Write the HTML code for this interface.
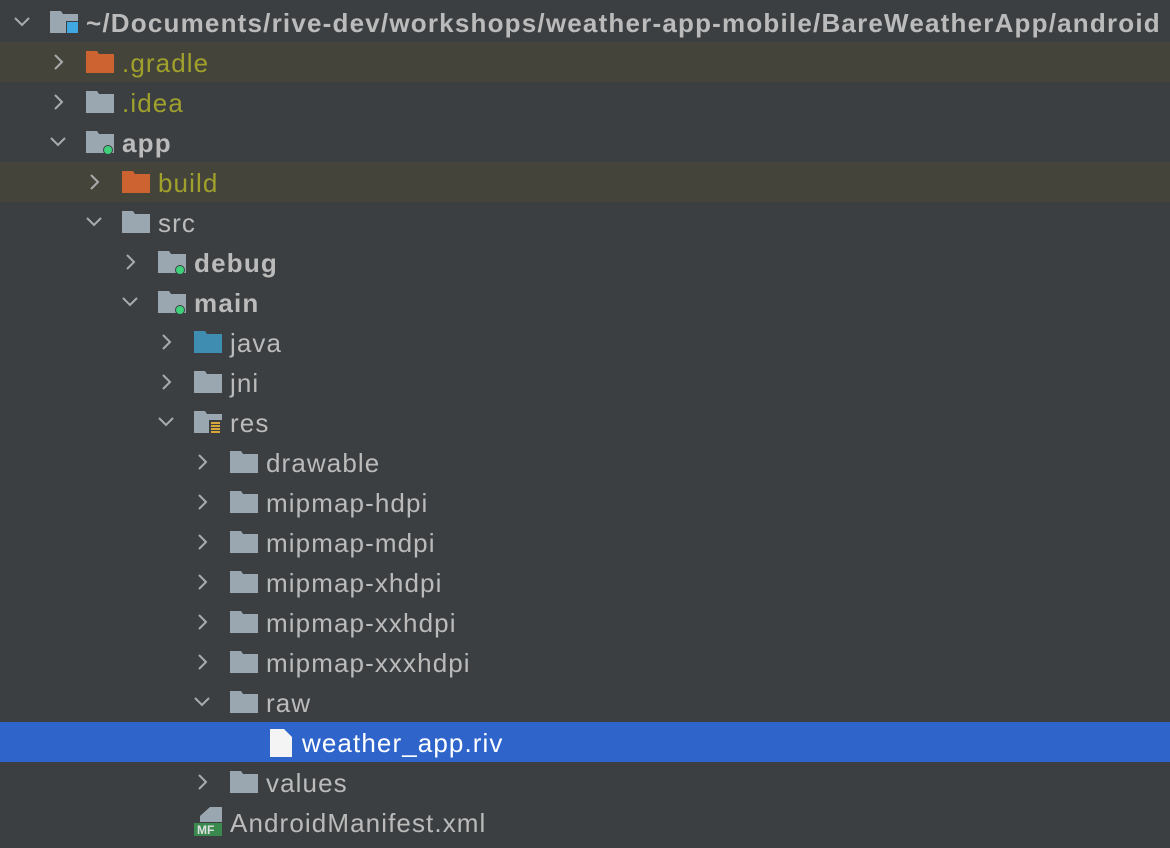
<!DOCTYPE html>
<html><head><style>
body{margin:0;width:1170px;height:848px;background:#3c3f41;overflow:hidden;font-family:"Liberation Sans",sans-serif;}
.r{position:absolute;left:0;width:1170px;height:40px;}
.hl{background:#45443a;}
.sel{background:#2f65ca;}
.r svg{position:absolute;}
.t{position:absolute;top:6px;font-size:26px;letter-spacing:1.1px;color:#bbbbbb;line-height:30px;white-space:nowrap;}
.o{color:#a0a02c}
.b{font-weight:bold;letter-spacing:1.2px}
.w{color:#ffffff}
</style></head><body>
<div id="tree"></div>
<script>
const F='#9aa7b0';
function chev(x,open){return open?`<svg style="left:${x-10}px;top:10px" width="20" height="20"><path d="M3 6 L10 13 L17 6" fill="none" stroke="#a9abad" stroke-width="2"/></svg>`:`<svg style="left:${x-7}px;top:10px" width="20" height="20"><path d="M4 3 L11 10 L4 17" fill="none" stroke="#a9abad" stroke-width="2"/></svg>`;}
function folder(x,c,extra){return `<svg style="left:${x}px;top:9px" width="32" height="26"><path d="M0 0 H11 L13 3 H28 V22 H0 Z" fill="${c}"/>${extra||''}</svg>`;}
const dot='<circle cx="22" cy="19" r="5" fill="#3c3f41"/><circle cx="22" cy="19" r="4" fill="#3ed17a"/>';
const sq='<rect x="16" y="10" width="13" height="13" fill="#3c3f41"/><rect x="17" y="11" width="11" height="11" fill="#3fa8e0"/>';
const resI='<rect x="15" y="9" width="13" height="16" fill="#3c3f41"/><g fill="#d9a63a"><rect x="17" y="11" width="9" height="2"/><rect x="17" y="14" width="9" height="2"/><rect x="17" y="17" width="9" height="2"/><rect x="17" y="20" width="9" height="2"/></g>';
const rows=[
[0,1,'~/Documents/rive-dev/workshops/weather-app-mobile/BareWeatherApp/android','b','root'],
[1,0,'.gradle','o','orange','hl'],
[1,0,'.idea','o','f'],
[1,1,'app','b','dot'],
[2,0,'build','o','orange','hl'],
[2,1,'src','','f'],
[3,0,'debug','b','dot'],
[3,1,'main','b','dot'],
[4,0,'java','','blue'],
[4,0,'jni','','f'],
[4,1,'res','','res'],
[5,0,'drawable','','f'],
[5,0,'mipmap-hdpi','','f'],
[5,0,'mipmap-mdpi','','f'],
[5,0,'mipmap-xhdpi','','f'],
[5,0,'mipmap-xxhdpi','','f'],
[5,0,'mipmap-xxxhdpi','','f'],
[5,1,'raw','','f'],
[6,-1,'weather_app.riv','w','file','sel'],
[5,0,'values','','f'],
[4,-1,'AndroidManifest.xml','','mf'],
];
let h='';
rows.forEach((r,i)=>{
 const [lv,op,txt,cls,ic,bg]=r;
 const cx=22+36*lv, ix=50+36*lv, tx=86+36*lv;
 let s=`<div class="r ${bg||''}" style="top:${2+40*i}px">`;
 if(op>=0)s+=chev(cx,op);
 if(ic=='root')s+=folder(ix,F,sq);
 else if(ic=='orange')s+=folder(ix,'#cc6330');
 else if(ic=='blue')s+=folder(ix,'#3f8db0');
 else if(ic=='dot')s+=folder(ix,F,dot);
 else if(ic=='res')s+=folder(ix,F,resI);
 else if(ic=='f')s+=folder(ix,F);
 else if(ic=='file')s+=`<svg style="left:${ix+4}px;top:7px" width="24" height="28"><path d="M0 0 H14 L22 8 V28 H0 Z" fill="#f4f4f4"/></svg>`;
 else if(ic=='mf')s+=`<svg style="left:${ix}px;top:4px" width="32" height="32"><path d="M6 1 H28 V16 H6 Z" fill="#9aa7b0"/><path d="M6 1 L16 1 L6 10 Z" fill="#3c3f41"/><rect x="0" y="17" width="28" height="13" fill="#3a8a4f"/><text x="3" y="28" font-size="12" font-weight="bold" fill="#e0e0e0" font-family="Liberation Sans">MF</text></svg>`;
 s+=`<div class="t ${cls}" style="left:${tx}px">${txt}</div></div>`;
 h+=s;
});
document.getElementById('tree').innerHTML=h;
</script>
</body></html>
